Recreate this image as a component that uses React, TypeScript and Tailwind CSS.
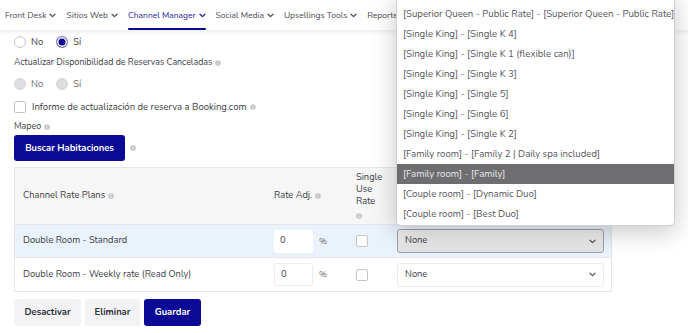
import React from 'react'

// Channel Manager mapping screen with an open room-type dropdown

const navItems = [
  { label: 'Front Desk', active: false },
  { label: 'Sitios Web', active: false },
  { label: 'Channel Manager', active: true },
  { label: 'Social Media', active: false },
  { label: 'Upsellings Tools', active: false },
  { label: 'Reportes', active: false },
]

const roomOptions = [
  '[Superior Queen - Public Rate] - [Superior Queen - Public Rate]',
  '[Single King] - [Single K 4]',
  '[Single King] - [Single K 1 (flexible can)]',
  '[Single King] - [Single K 3]',
  '[Single King] - [Single 5]',
  '[Single King] - [Single 6]',
  '[Single King] - [Single K 2]',
  '[Family room] - [Family 2 | Daily spa included]',
  '[Family room] - [Family]',
  '[Couple room] - [Dynamic Duo]',
  '[Couple room] - [Best Duo]',
]

const Chevron = ({ className = '' }: { className?: string }) => (
  <svg className={className} width="7" height="5" viewBox="0 0 7 5" fill="none">
    <path d="M1 1.2l2.5 2.4L6 1.2" stroke="currentColor" strokeWidth="1.2" strokeLinecap="round" strokeLinejoin="round" />
  </svg>
)

const Info = () => (
  <svg width="6" height="6" viewBox="0 0 7 7" className="inline-block shrink-0">
    <circle cx="3.5" cy="3.5" r="3.3" fill="#c4c4c8" />
    <rect x="3.05" y="3" width="0.9" height="2.4" fill="#fff" />
    <rect x="3.05" y="1.5" width="0.9" height="0.9" fill="#fff" />
  </svg>
)

const Radio = ({ state }: { state: 'off' | 'on' | 'disabled' }) => {
  if (state === 'on')
    return <span className="block w-[12px] h-[12px] rounded-full border border-[#8a8ab8] bg-[#0a0a96] shadow-[inset_0_0_0_1.5px_#fff]" />
  if (state === 'disabled')
    return <span className="block w-[12px] h-[12px] rounded-full border border-[#d4d4d6] bg-[#dedee0]" />
  return <span className="block w-[12px] h-[12px] rounded-full border border-[#c8c8cc] bg-white" />
}

const Checkbox = () => (
  <span className="block w-[12px] h-[12px] rounded-[2px] border border-[#c4c4c8] bg-white shrink-0" />
)

const App = () => {
  return (
    <div className="relative w-[688px] h-[333px] overflow-hidden bg-white text-[#3d3d45]" style={{ fontFamily: 'Nunito, Lato, "Open Sans", sans-serif' }}>
      {/* Top navigation */}
      <nav className="relative h-[30px] flex items-center pl-[5px] bg-white shadow-[0_2px_4px_rgba(0,0,0,0.08)] text-[8.5px] z-10">
        {navItems.map((item) => (
          <div
            key={item.label}
            className={`relative h-full flex items-center gap-[3px] mr-[10px] whitespace-nowrap ${item.active ? 'text-[#1d1d9e]' : 'text-[#4a4a55]'}`}
          >
            {item.label}
            <Chevron />
            {item.active && <span className="absolute left-0 right-0 bottom-0 h-[2px] bg-[#0a0a8a] rounded-full" />}
          </div>
        ))}
      </nav>

      <div className="pl-[14px] text-[8.9px]">
        {/* Radio No / Sí */}
        <div className="mt-[4px] h-[16px] flex items-center text-[9.4px]">
          <Radio state="off" />
          <span className="ml-[5px]">No</span>
          <span className="ml-[13px]"><Radio state="on" /></span>
          <span className="ml-[5px]">Sí</span>
        </div>

        <div className="mt-[5px] h-[16px] flex items-center gap-[3px]">
          Actualizar Disponibilidad de Reservas Canceladas <Info />
        </div>

        <div className="mt-[5px] h-[16px] flex items-center text-[9.4px] text-[#6a6a72]">
          <Radio state="disabled" />
          <span className="ml-[5px]">No</span>
          <span className="ml-[13px]"><Radio state="disabled" /></span>
          <span className="ml-[5px]">Sí</span>
        </div>

        <div className="mt-[7px] h-[16px] flex items-center gap-[6px] text-[9.5px]">
          <Checkbox />
          <span className="flex items-center gap-[3px]">Informe de actualización de reserva a Booking.com <Info /></span>
        </div>

        <div className="mt-[5px] h-[14px] flex items-center gap-[3px]">
          Mapeo <Info />
        </div>

        <div className="mt-[1px] flex items-center gap-[5px]">
          <button className="h-[26px] w-[111px] rounded-[3px] bg-[#0a0a96] text-white text-[9.4px] font-bold">
            Buscar Habitaciones
          </button>
          <Info />
        </div>

        {/* Mapping table */}
        <div className="mt-[6px] w-[598px] border border-[#e6e6ea] text-[9.3px]">
          <div className="h-[57px] flex items-center bg-[#f6f6f7] border-b border-[#e6e6ea]">
            <div className="w-[251px] pl-[8px] flex items-center gap-[3px]">Channel Rate Plans <Info /></div>
            <div className="w-[82px] pl-[8px] flex items-center gap-[3px]">Rate Adj. <Info /></div>
            <div className="w-[41px] pl-[8px] leading-[12px]">
              Single<br />Use<br />Rate<br /><span className="inline-block mt-[2px]"><Info /></span>
            </div>
            <div className="flex-1" />
          </div>

          <div className="h-[33px] flex items-center bg-[#eaf2fb] border-b border-[#e6e6ea]">
            <div className="w-[251px] pl-[8px]">Double Room - Standard</div>
            <div className="w-[82px] pl-[8px] flex items-center">
              <div className="w-[39px] h-[23px] bg-white rounded-[2px] pl-[6px] flex items-center">0</div>
              <span className="ml-[6px] text-[8.5px] text-[#666]">%</span>
            </div>
            <div className="w-[41px] pl-[8px] flex"><Checkbox /></div>
            <div className="flex-1 pl-[8px] pr-[7px]">
              <div className="h-[24px] rounded-[3px] border border-[#9ea4ac] bg-gradient-to-b from-[#f1f1f1] to-[#e2e2e2] flex items-center justify-between px-[7px]">
                None <Chevron className="text-[#555]" />
              </div>
            </div>
          </div>

          <div className="h-[33px] flex items-center bg-white">
            <div className="w-[251px] pl-[8px]">Double Room - Weekly rate (Read Only)</div>
            <div className="w-[82px] pl-[8px] flex items-center">
              <div className="w-[39px] h-[23px] bg-white border border-[#eeeeef] rounded-[2px] pl-[6px] flex items-center">0</div>
              <span className="ml-[6px] text-[8.5px] text-[#666]">%</span>
            </div>
            <div className="w-[41px] pl-[8px] flex"><Checkbox /></div>
            <div className="flex-1 pl-[8px] pr-[7px]">
              <div className="h-[24px] rounded-[3px] border border-[#ececee] bg-white flex items-center justify-between px-[7px]">
                None <Chevron className="text-[#555]" />
              </div>
            </div>
          </div>
        </div>

        {/* Action buttons */}
        <div className="mt-[7px] flex gap-[4px] text-[9.4px] font-bold">
          <button className="h-[27px] w-[67px] rounded-[3px] bg-[#f3f3f5] text-[#2d2d35]">Desactivar</button>
          <button className="h-[27px] w-[55px] rounded-[3px] bg-[#f3f3f5] text-[#2d2d35]">Eliminar</button>
          <button className="h-[27px] w-[57px] rounded-[3px] bg-[#0a0a96] text-white">Guardar</button>
        </div>
      </div>

      {/* Open select dropdown */}
      <div className="absolute left-[396px] top-[-7px] w-[279px] pt-[10px] pb-[1px] bg-white border border-[#cfcfd4] rounded-b-[5px] shadow-[0_6px_24px_rgba(0,0,0,0.22)] text-[9.6px] text-[#55555c] z-20">
        {roomOptions.map((opt) => (
          <div
            key={opt}
            className={`h-[20px] flex items-center pl-[6px] whitespace-nowrap ${opt === '[Family room] - [Family]' ? 'bg-[#6e6e70] text-[#e8e8ea]' : ''}`}
          >
            {opt}
          </div>
        ))}
      </div>
    </div>
  )
}

export default App
